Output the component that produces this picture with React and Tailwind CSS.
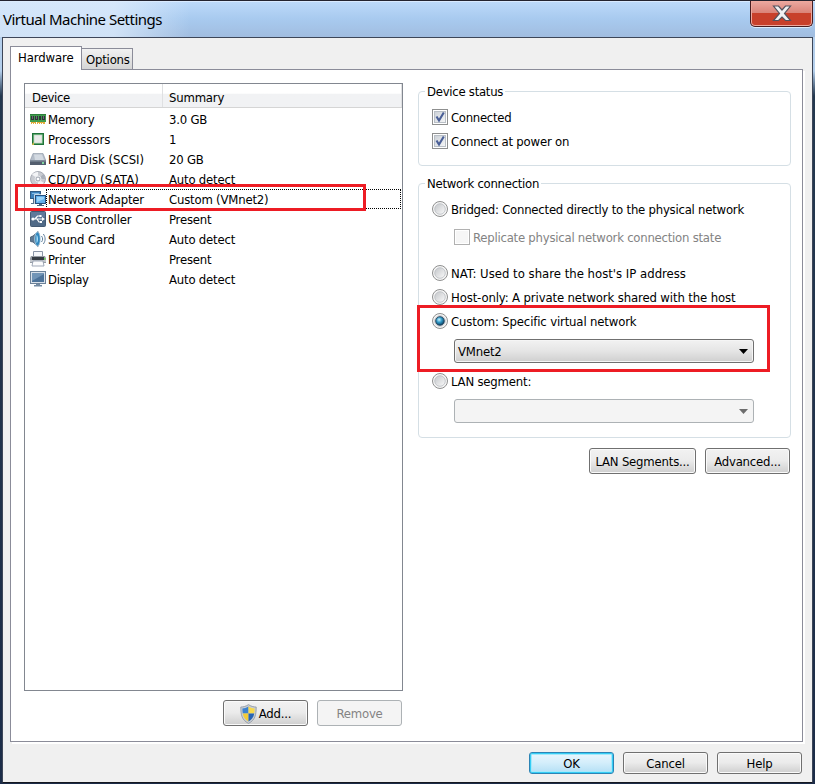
import React from 'react';

const MemoryIcon = () => (
  <svg width="16" height="16" viewBox="0 0 16 16">
    <rect x="0" y="3" width="16" height="8" fill="#3f9b4c" />
    <rect x="0" y="3" width="16" height="1" fill="#2b8039" />
    <path d="M1 5h3v4H1zM5 5h3v4H5zM9 5h2v4H9zM12 5h3v4h-3z" fill="#30343a" />
    <path d="M2 5h1v3H2zM6 5h1v3H6zM13 5h1v3h-1z" fill="#6a6d72" />
    <path d="M1 11h5v2H1zM7 11h8v2H7z" fill="#e2ab3c" />
    <path d="M2 12h1v1H2zM4 12h1v1H4zM8 12h1v1H8zM10 12h1v1h-1zM12 12h1v1h-1z" fill="#fff" />
  </svg>
);

const ProcessorIcon = () => (
  <svg width="16" height="16" viewBox="0 0 16 16">
    <rect x="2" y="2" width="12" height="12" fill="#3a9450" />
    <rect x="2.5" y="2.5" width="11" height="11" fill="none" stroke="#1f733a" />
    <rect x="4" y="4" width="8" height="8" fill="#e9eae9" stroke="#bfd6c3" strokeWidth=".7" />
    <path d="M2 13l2-2v3H2z" fill="#c8b84a" />
  </svg>
);

const DiskIcon = () => (
  <svg width="16" height="16" viewBox="0 0 16 16">
    <path d="M3 2.500h10l3 7.500H0z" fill="#b4bdc9" stroke="#8a95a4" strokeWidth=".6" />
    <path d="M4 3.500h8l2 5.500H5z" fill="#d3dae2" />
    <path d="M0 9.500h16V14H0z" fill="#535e6e" />
    <path d="M0 9.500h16v1H0z" fill="#8994a3" />
    <rect x="12" y="11" width="2" height="2" fill="#81d6a0" />
  </svg>
);

const DiscIcon = () => (
  <svg width="16" height="16" viewBox="0 0 16 16">
    <circle cx="8" cy="8" r="7.5" fill="#c9ccd2" stroke="#989da7" strokeWidth=".8" />
    <path d="M8 8L2 3.500A7 7 0 018 1zM8 8l6 4a7 7 0 01-6 3z" fill="#f3f4f6" />
    <path d="M8 8l5.500-5A7 7 0 0115 8z" fill="#aab0ba" />
    <circle cx="8" cy="8" r="3" fill="#b0b5be" stroke="#e7e9ec" />
    <circle cx="8" cy="8" r="1.300" fill="#fff" />
  </svg>
);

const NetworkIcon = () => (
  <svg width="16" height="16" viewBox="0 0 16 16">
    <rect x="0.5" y="0.5" width="10" height="7" fill="#3f82bd" stroke="#315c86" />
    <path d="M2 2h7v1H2z" fill="#86bce5" />
    <path d="M3 8h2v3h1v2H1v-1h2z" fill="#53718f" />
    <rect x="5.500" y="4.500" width="10" height="7.500" fill="#64b2ed" stroke="#fff" strokeWidth="2.400" />
    <rect x="5.500" y="4.500" width="10" height="8" fill="#61aeea" stroke="#244f7e" />
    <path d="M7 6h7v2l-7 3z" fill="#9bd3f8" />
    <path d="M9 13h3v1h2v1H7v-1h2z" fill="#486682" />
  </svg>
);

const UsbIcon = () => (
  <svg width="16" height="16" viewBox="0 0 16 16">
    <rect x="0.5" y="0.5" width="15" height="15" rx="1" fill="#506a87" stroke="#445a73" />
    <path d="M1 1h14v5L1 9z" fill="#60799a" />
    <path d="M3 8h10M5 8l2.500-3H10M7 8l2 3h2" fill="none" stroke="#fff" strokeWidth="1.200" />
    <circle cx="3" cy="8" r="1.600" fill="#fff" />
    <path d="M12 6l3 2-3 2zM9.500 4h2v2h-2zM10 10h2v2h-2z" fill="#fff" />
  </svg>
);

const SoundIcon = () => (
  <svg width="16" height="16" viewBox="0 0 16 16">
    <path d="M0.500 6L3 5l5-4.500c2 3 2 12 0 15L3 11 .5 10.500z" fill="#5e7891" stroke="#3f566d" strokeWidth=".8" />
    <ellipse cx="7.500" cy="8" rx="2.800" ry="7" fill="#3187bd" stroke="#c2d7e5" strokeWidth=".8" />
    <path d="M6.500 4c2 1 2 7 0 8z" fill="#a9def8" />
    <path d="M11.500 5c1.500 2 1.500 4 0 6M13.300 3c2.400 3 2.400 7 0 10" fill="none" stroke="#607f9c" />
  </svg>
);

const PrinterIcon = () => (
  <svg width="16" height="16" viewBox="0 0 16 16">
    <path d="M3.500 6V.5h9V6" fill="#f5f7fa" stroke="#8a95a7" />
    <path d="M1 5h14l1 2v5H0V7z" fill="#979da5" />
    <path d="M2 6h12v3H2z" fill="#373d44" />
    <path d="M0 9h16v2H0z" fill="#c4c8ce" />
    <path d="M3 10h10l1 5H2z" fill="#fcfcfd" stroke="#8c96a7" strokeWidth=".8" />
    <rect x="14" y="7" width="1.500" height="1.500" fill="#65e354" />
  </svg>
);

const DisplayIcon = () => (
  <svg width="16" height="16" viewBox="0 0 16 16">
    <rect x="0.5" y="0.5" width="15" height="12" fill="#d9e1ea" stroke="#6c8198" />
    <rect x="2" y="2" width="12" height="9" fill="#4c7299" />
    <path d="M2 2h12v1L2 10z" fill="#7295b7" />
    <path d="M6 13h4v1h2v1.500H4V14h2z" fill="#748ba3" />
  </svg>
);

const ShieldIcon = () => (
  <svg width="17" height="20" viewBox="0 0 17 20">
    <path d="M8.500.6C6 2.300 3.500 3 .8 3c0 8 1 13 7.700 16.400C15.200 16 16.200 11 16.200 3c-2.700 0-5.200-.7-7.700-2.400z" fill="#c9ced5" stroke="#8c949e" strokeWidth=".8" />
    <path d="M8.500 2.400C6.500 3.700 4.500 4.200 2.400 4.400c0 2 .1 3.600.4 5.200h5.700z" fill="#3c82cf" />
    <path d="M8.500 2.400c2 1.300 4 1.800 6.100 2 0 2-.1 3.600-.4 5.200H8.500z" fill="#f8d94c" />
    <path d="M2.800 9.600h5.700v8C5.200 15.800 3.500 13.500 2.800 9.600z" fill="#f3cb35" />
    <path d="M14.200 9.600H8.500v8c3.300-1.800 5-4.100 5.700-8z" fill="#2864b4" />
  </svg>
);

const devices = [
  { name: 'Memory', summary: '3.0 GB', icon: MemoryIcon },
  { name: 'Processors', summary: '1', icon: ProcessorIcon, tracking: 'tracking-[0px]' },
  { name: 'Hard Disk (SCSI)', summary: '20 GB', icon: DiskIcon, tracking: 'tracking-[0px]' },
  { name: 'CD/DVD (SATA)', summary: 'Auto detect', icon: DiscIcon, tracking: 'tracking-[0.2px]' },
  { name: 'Network Adapter', summary: 'Custom (VMnet2)', icon: NetworkIcon, selected: true },
  { name: 'USB Controller', summary: 'Present', icon: UsbIcon, tracking: 'tracking-[-0.12px]' },
  { name: 'Sound Card', summary: 'Auto detect', icon: SoundIcon, tracking: 'tracking-[-0.1px]' },
  { name: 'Printer', summary: 'Present', icon: PrinterIcon },
  { name: 'Display', summary: 'Auto detect', icon: DisplayIcon, tracking: 'tracking-[-0.35px]' },
];

const buttonStyles = {
  normal: 'border-[#707070] bg-linear-to-b from-[#f2f2f2] via-[#ebebeb] via-48% to-[#cfcfcf] shadow-[inset_0_0_0_1px_#fafafa]',
  primary: 'border-[#2c84b5] bg-linear-to-b from-[#eaf6fd] via-[#d4eefb] via-48% to-[#b3dff5] shadow-[inset_0_0_0_1px_#35cdf5,inset_0_0_0_2px_#a5e9fb]',
  disabled: 'border-[#adb2b5] bg-[#f4f4f4] text-[#838383]',
};

const Button = ({ children, variant = 'normal', size = 'w-[85px] h-[26px]' }) => (
  <button className={`flex items-center justify-center gap-[2px] rounded-[3px] border pt-px whitespace-nowrap ${size} ${buttonStyles[variant]}`}>
    {children}
  </button>
);

const Checkbox = ({ checked, disabled }) => (
  <span className={`w-4 h-4 shrink-0 border p-px bg-white ${disabled ? 'border-[#b1b1b1]' : 'border-[#8e8f8f]'}`}>
    <span className={`block w-3 h-3 ${disabled ? 'bg-[#f6f6f6]' : 'border border-[#b9bfc6] bg-linear-to-br from-[#cdd2d8] to-[#f4f5f6]'}`}>
      {checked && (
        <svg className="block -mt-px" width="11" height="12" viewBox="0 0 11 12">
          <path d="M1.500 5.500L4 9.500 8.800 1.500" fill="none" stroke="#4a5f97" strokeWidth="2.100" />
        </svg>
      )}
    </span>
  </span>
);

const RadioButton = ({ checked }) => (
  <svg className="shrink-0" width="16" height="16" viewBox="0 0 16 16">
    <defs>
      <linearGradient id="radioFill" x1="0" y1="0" x2="1" y2="1">
        <stop offset="0" stopColor="#c3c6c9" />
        <stop offset="1" stopColor="#fbfbfb" />
      </linearGradient>
      <radialGradient id="radioDot" cx=".4" cy=".35" r=".7">
        <stop offset="0" stopColor="#c9f1fd" />
        <stop offset=".45" stopColor="#2f9ac8" />
        <stop offset="1" stopColor="#0b3553" />
      </radialGradient>
    </defs>
    <circle cx="8" cy="8" r="7.500" fill="#f6f6f6" stroke="#8e8f8f" />
    <circle cx="8" cy="8" r="5.300" fill="url(#radioFill)" stroke="#b9bdc1" strokeWidth=".8" />
    {checked && <circle cx="8" cy="8" r="4.300" fill="url(#radioDot)" stroke="#173a55" strokeWidth=".8" />}
  </svg>
);

const Option = ({ children, label, className = '' }) => (
  <label className={`flex items-center gap-[3px] h-4 whitespace-nowrap ${className}`}>
    {children}
    <span className="pt-[2px]">{label}</span>
  </label>
);

const Select = ({ value, disabled, className = '' }) => (
  <div
    className={`flex items-center justify-between w-[300px] h-6 rounded-[3px] border pl-[3px] pr-[5px] ${
      disabled
        ? 'border-[#adb2b5] bg-[#f4f4f4]'
        : 'border-[#707070] bg-linear-to-b from-[#f2f2f2] via-[#e5e5e5] to-[#cfcfcf] shadow-[inset_0_0_0_1px_#f5f5f5]'
    } ${className}`}
  >
    <span className="pt-[2px]">{value}</span>
    <svg width="9" height="5" viewBox="0 0 9 5">
      <path d="M0 0h9L4.500 5z" fill={disabled ? '#6d6d6d' : '#000'} />
    </svg>
  </div>
);

const Group = ({ title, children, className = '' }) => (
  <fieldset className={`relative w-[373px] rounded-[4px] border border-[#d5dfe5] ${className}`}>
    <span className="absolute -top-2 left-[6px] bg-white px-[2px] leading-4 tracking-[-0.27px]">{title}</span>
    {children}
  </fieldset>
);

const App = () => {
  return (
    <div className="w-[815px] h-[784px] overflow-hidden flex flex-col border-t border-[#23232f] bg-linear-to-b from-[#b4cfec] from-[70px] via-[#24384f] via-[95px] to-[#1c2c48] font-['DejaVu_Sans_Condensed','DejaVu_Sans',sans-serif] text-[13px] leading-4 tracking-[-0.2px] text-black">
      <div className="flex justify-between h-9 shrink-0 bg-linear-to-b from-[#bddafa] via-[#a8caef] to-[#a1bde0] shadow-[inset_0_1px_0_#d9eaff]">
        <div className="w-[190px] pl-[3px] pt-[6px] bg-linear-to-r from-[#dcebfb]/80 from-60% to-transparent font-['Noto_Sans',sans-serif] text-[15px] leading-6 tracking-[-0.5px] whitespace-nowrap">
          Virtual Machine Settings
        </div>
        <button className="flex items-center justify-center mr-[2px] w-[63px] h-[26px] rounded-b-[5px] border border-t-0 border-[#481d20] bg-linear-to-b from-[#eba9a1] from-0% via-[#d98277] via-49% to-[#c8402b] to-50% shadow-[inset_0_0_0_1px_#eea89d,0_1px_0_#dcecfb]">
          <svg width="20" height="17" viewBox="0 0 20 17">
            <path d="M1.500 1h5L10 5l3.500-4h5l-6 7.500 6 7h-5L10 12l-3.500 3.500h-5l6-7z" fill="#f1f1f2" stroke="#53535e" strokeWidth="1.200" />
          </svg>
        </button>
      </div>

      <div className="ml-[2px] mr-[2px] h-[746px] shrink-0 border border-[#3d4658] border-b-[#151820] bg-[#f0f0f0] pt-2 pl-[7px]">
        <div className="relative flex items-end h-6 z-10">
          <div className="w-[72px] h-6 border border-b-0 border-[#8b8c99] bg-white pl-[7px] pt-[3px] tracking-[-0.1px]">Hardware</div>
          <div className="w-[51px] h-[22px] border border-l-0 border-[#8b8c99] bg-linear-to-b from-[#f2f2f2] to-[#d5d5d5] pl-1 pt-[3px]">Options</div>
        </div>

        <div className="-mt-px flex w-[793px] h-[673px] border border-[#8b8c99] bg-white pl-[13px] pt-[13px] shadow-[2px_2px_0_#fff]">
          <div className="w-[379px] shrink-0">
            <div className="relative h-[608px] border border-[#828790]">
              <div className="flex h-6 mb-px border-b border-[#d5d5d5] bg-linear-to-b from-white from-40% to-[#f1f2f4] to-45%">
                <div className="pt-[6px] w-[138px] border-r border-[#dfe0e2] pl-[7px] tracking-[-0.35px]">Device</div>
                <div className="pt-[6px] w-[239px] border-r border-[#dfe0e2] pl-[6px]">Summary</div>
              </div>
              {devices.map(({ name, summary, icon: Icon, selected, tracking = '' }) => (
                <div key={name} className="flex items-center h-5 pl-[5px] pr-px whitespace-nowrap">
                  <Icon />
                  <div className={`flex items-center h-5 w-[355px] border border-dotted pt-[2px] ${selected ? 'border-black' : 'border-transparent'}`}>
                    <span className={`w-[122px] pl-px ${tracking}`}>{name}</span>
                    <span>{summary}</span>
                  </div>
                </div>
              ))}
              <div className="absolute left-[-10px] top-[100px] w-[351px] h-[27px] border-3 border-[#ed1c24]" />
            </div>
            <div className="flex justify-end gap-[9px] mt-[9px] pr-px">
              <Button><ShieldIcon />Add...</Button>
              <Button variant="disabled">Remove</Button>
            </div>
          </div>

          <div className="ml-[15px] pt-2">
            <Group title="Device status" className="h-[75px] pl-[13px] pt-[17px]">
              <Option label="Connected" className="tracking-[-0.3px]"><Checkbox checked /></Option>
              <Option label="Connect at power on" className="mt-2"><Checkbox checked /></Option>
            </Group>
            <Group title="Network connection" className="mt-[17px] h-[255px] pl-[13px] pt-[17px]">
              <Option label="Bridged: Connected directly to the physical network" className="tracking-[-0.23px]"><RadioButton /></Option>
              <Option label="Replicate physical network connection state" className="mt-3 ml-[22px] text-[#838383] tracking-[-0.24px]"><Checkbox disabled /></Option>
              <Option label="NAT: Used to share the host's IP address" className="mt-5 tracking-[0px]"><RadioButton /></Option>
              <Option label="Host-only: A private network shared with the host" className="mt-2 tracking-[-0.13px]"><RadioButton /></Option>
              <Option label="Custom: Specific virtual network" className="mt-2 tracking-[-0.15px]"><RadioButton checked /></Option>
              <Select value="VMnet2" className="mt-[10px] ml-[22px]" />
              <Option label="LAN segment:" className="mt-[10px]"><RadioButton /></Option>
              <Select disabled className="mt-[10px] ml-[22px]" />
              <div className="absolute left-[-2px] top-[121px] w-[353px] h-[67px] border-3 border-[#ed1c24]" />
            </Group>
            <div className="flex justify-end gap-[9px] mt-[10px] pr-px">
              <Button size="w-[107px] h-[26px]">LAN Segments...</Button>
              <Button>Advanced...</Button>
            </div>
          </div>
        </div>

        <div className="flex justify-end gap-[9px] mt-[10px] pr-[10px]">
          <Button variant="primary" size="w-[85px] h-[22px]">OK</Button>
          <Button size="w-[85px] h-[22px]">Cancel</Button>
          <Button size="w-[85px] h-[22px]">Help</Button>
        </div>
      </div>
    </div>
  );
};

export default App;
